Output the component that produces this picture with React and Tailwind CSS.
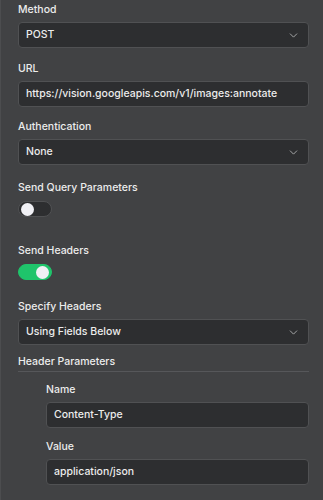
import React from "react";
import { ChevronDown } from "lucide-react";

const font = { fontFamily: "Inter, 'Liberation Sans', sans-serif" };

function Label({ children, className = "" }) {
  return <div className={`text-[10.5px] leading-[18px] font-medium text-[#ececec] ${className}`}>{children}</div>;
}

function Select({ value }) {
  return (
    <div className="mt-[3px] h-[26px] flex items-center justify-between pl-[7px] pr-[8px] rounded-[4px] bg-[#2d2e30] border border-[#505153] text-[10.5px] font-medium text-[#ececec]">
      <span>{value}</span>
      <ChevronDown className="w-[13px] h-[13px] text-[#a9aaab]" strokeWidth={1.75} />
    </div>
  );
}

function Input({ value }) {
  return (
    <div className="mt-[3px] h-[26px] flex items-center pl-[7px] rounded-[4px] bg-[#2d2e30] border border-[#505153] text-[10.5px] font-medium text-[#ececec] whitespace-nowrap overflow-hidden">
      {value}
    </div>
  );
}

function Toggle({ on }) {
  return (
    <div className={`mt-[4px] w-[34px] h-[16px] rounded-full flex items-center px-[2px] border ${on ? "bg-[#1fc46b] border-[#1fc46b] justify-end" : "bg-[#2d2e30] border-[#505153] justify-start"}`}>
      <div className="w-[13px] h-[13px] rounded-full bg-[#f0f0f5]" />
    </div>
  );
}

export default function App() {
  return (
    <div style={font} className="w-[323px] h-[500px] bg-[#414244] border-l border-[#4c4d4f] pt-[1px] pl-[17px] pr-[14px] overflow-hidden">
      <Label>Method</Label>
      <Select value="POST" />

      <Label className="mt-[12px]">URL</Label>
      <Input value="https://vision.googleapis.com/v1/images:annotate" />

      <Label className="mt-[11px]">Authentication</Label>
      <Select value="None" />

      <Label className="mt-[14px]">Send Query Parameters</Label>
      <Toggle on={false} />

      <Label className="mt-[25px]">Send Headers</Label>
      <Toggle on={true} />

      <Label className="mt-[18px]">Specify Headers</Label>
      <Select value="Using Fields Below" />

      <Label className="mt-[8px] border-b border-[#56575a]">Header Parameters</Label>

      <div className="pl-[28px] pt-[9px]">
        <Label>Name</Label>
        <Input value="Content-Type" />
        <Label className="mt-[10px]">Value</Label>
        <Input value="application/json" />
      </div>
    </div>
  );
}
